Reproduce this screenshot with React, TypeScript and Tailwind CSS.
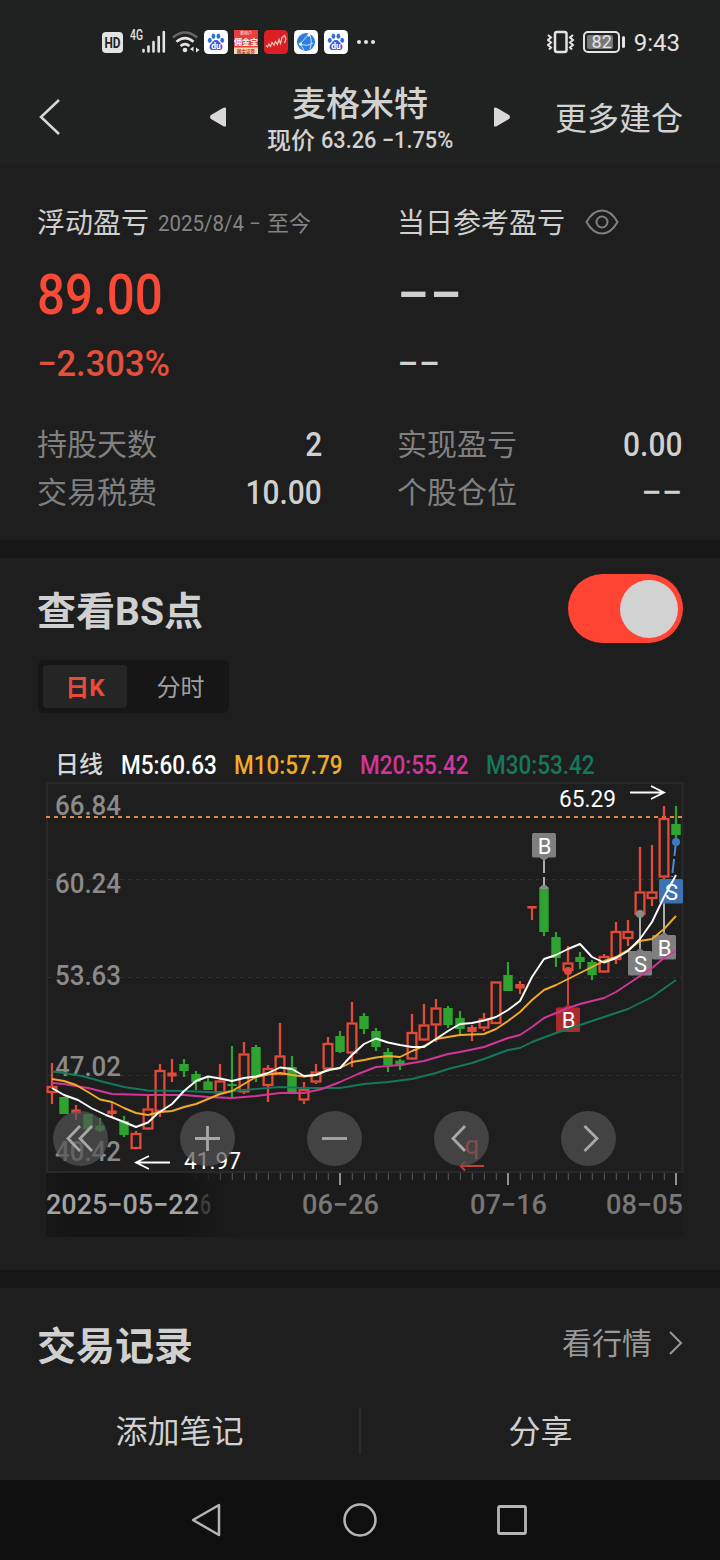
import React from 'react';
import clsx from 'clsx';

type Candle = {
  type: 'up' | 'down' | 'flat';
  top: number;
  bottom: number;
  high: number;
  low: number;
};

const c = (type: Candle['type'], top: number, bottom: number, high = top, low = bottom): Candle => ({
  type, top, bottom, high, low,
});

// One entry per trading day, 12px apart
const candles: Candle[] = [
  c('up', 1086, 1093, 1063, 1104),
  c('down', 1097, 1114),
  c('flat', 1109.5, 1113.5, 1105, 1120),
  c('down', 1114, 1129),
  c('down', 1125.5, 1130.5, 1118, 1132),
  c('flat', 1110.5, 1114, 1102, 1117),
  c('down', 1121, 1135, 1116, 1137),
  c('up', 1133, 1149, 1131, 1149),
  c('up', 1108.5, 1129.5, 1095, 1129),
  c('up', 1070, 1112, 1064, 1117),
  c('flat', 1072.5, 1076.5, 1059, 1082),
  c('down', 1064, 1071, 1059, 1077),
  c('down', 1074, 1082, 1071, 1090),
  c('down', 1081.5, 1090, 1078, 1090),
  c('up', 1080.5, 1093.5, 1064, 1095),
  c('down', 1084, 1086, 1046, 1097),
  c('up', 1053.5, 1092.5, 1042, 1094),
  c('down', 1047, 1077, 1045, 1082),
  c('up', 1068, 1086, 1065, 1102),
  c('up', 1055.5, 1075, 1023, 1075),
  c('down', 1067, 1092, 1056, 1092),
  c('up', 1089, 1100.5, 1082, 1104),
  c('up', 1071.5, 1082.5, 1064, 1084),
  c('up', 1043, 1069.5, 1037, 1072),
  c('down', 1036, 1052, 1031, 1053),
  c('up', 1022.5, 1053.5, 1002, 1067),
  c('down', 1016, 1029, 1013, 1034),
  c('down', 1031, 1047, 1028, 1051),
  c('down', 1052, 1065, 1048, 1072),
  c('down', 1060.5, 1065.5, 1059, 1070),
  c('up', 1032, 1059.5, 1014, 1059),
  c('up', 1024.5, 1040.5, 1004, 1041),
  c('up', 1007.5, 1025.5, 999, 1042),
  c('down', 1008, 1025, 1006, 1028),
  c('down', 1018, 1029, 1011, 1034),
  c('flat', 1027, 1032, 1025, 1041),
  c('up', 1018.5, 1028.5, 1013, 1031),
  c('up', 981.5, 1024),
  c('down', 975, 991, 962, 991),
  c('flat', 984, 988.5, 981, 994),
  c('flat', 906, 908.5, 906, 920),
  c('down', 887, 932, 884, 936),
  c('down', 937, 958, 932, 967),
  c('up', 962.5, 971, 946, 971),
  c('down', 957, 962, 952, 969),
  c('down', 962, 975, 960, 980),
  c('up', 956, 972.5, 954, 972),
  c('up', 931, 960, 922, 964),
  c('up', 931, 939, 920, 946),
  c('up', 891.5, 915, 847, 915),
  c('up', 891.5, 899, 845, 906),
  c('up', 818, 877.5, 806, 897),
  c('down', 824, 835, 806, 840),
];

const averages = [
  {
    color: '#15785a',
    points: '52,1071.5 64,1073 82,1076 100,1081 124,1087 148,1090.5 184,1091 220,1092.5 244,1090 280,1087 304,1088 340,1088 364,1084 388,1082 412,1079 436,1073 448,1069 472,1063 484,1059 508,1050 520,1048 532,1042 556,1033 580,1025 604,1017 628,1009 652,997 676,980',
  },
  {
    color: '#d4359b',
    points: '52,1083 64,1084 88,1088 112,1094 148,1095 184,1095 208,1097 232,1098 256,1096 280,1093 304,1093 322,1089 340,1082 358,1074 376,1067 400,1065 424,1061 448,1054 460,1052 484,1047 508,1038 520,1035 532,1027 544,1018 556,1013 568,1008 580,1004 604,998 616,992 640,976 652,968 664,958 676,951',
  },
  {
    color: '#f0ab29',
    points: '52,1079 64,1081 76,1085 88,1092 100,1099.5 112,1102 124,1108 136,1113 148,1115 160,1112 172,1111 184,1107 196,1104 208,1099 220,1094 232,1091 244,1084 256,1077 268,1074.5 280,1073 292,1075 304,1076.5 316,1075 328,1070 340,1068 352,1062 364,1060 376,1057.5 388,1056 400,1057 412,1051 424,1046 436,1039 448,1037 460,1035 484,1034 496,1029 508,1021 520,1012 532,1000 544,990 556,985 568,979 580,973 592,967 604,961 616,957 628,950 640,941 652,939 664,929 676,916',
  },
  {
    color: '#ffffff',
    points: '52,1088 64,1095 78,1100 92,1108.5 106,1115 124,1122 136,1127 148,1122.5 158,1113 172,1104 184,1091 196,1081 208,1076.5 220,1078.5 232,1081 244,1078 256,1076.5 268,1073 280,1067.5 292,1069 304,1076 316,1075 328,1070 340,1068 352,1055 364,1044 376,1038.5 388,1042.5 400,1045 412,1047 424,1047 436,1039 448,1031 460,1024 472,1023 484,1020.5 496,1017 508,1010 520,1001 532,977 544,959 556,955 568,949 580,944 592,957 604,962.5 616,958 628,951 640,939 652,922 664,897 676,875',
  },
];

const priceLabels = [
  { text: '66.84', y: 815 },
  { text: '60.24', y: 893 },
  { text: '53.63', y: 985 },
  { text: '47.02', y: 1076 },
  { text: '40.42', y: 1161 },
];

const markers = [
  { text: 'B', x: 532, y: 833, color: '#7f7f7f' },
  { text: 'B', x: 556, y: 1007.5, color: '#ad2a2d' },
  { text: 'S', x: 628, y: 951, color: '#7f7f7f' },
  { text: 'B', x: 652, y: 935, color: '#7f7f7f' },
  { text: 'S', x: 659, y: 879, color: '#3f72b3' },
];

const ticks = Array.from({ length: 41 }, (_, i) => 196 + i * 12);

function CandleShape({ candle, x }: { candle: Candle; x: number }) {
  const { type, top, bottom, high, low } = candle;
  const color = type === 'down' ? '#2fa32f' : '#e24b3a';
  if (type !== 'up') {
    return (
      <g fill={color}>
        <rect x={x - 1.1} y={high} width="2.2" height={low - high} />
        <rect x={x - 4.7} y={top} width="9.4" height={bottom - top} />
      </g>
    );
  }
  return (
    <g stroke={color} strokeWidth="2.3" fill="none">
      <path d={`M${x} ${high}V${top}M${x} ${bottom}V${low}`} />
      <rect x={x - 4.4} y={top + 1} width="8.8" height={bottom - top - 2} />
    </g>
  );
}

function Chart() {
  return (
    <svg viewBox="46 782 638 456" width="638" height="456" className="block" fontFamily="Roboto, 'Noto Sans CJK SC', sans-serif">
      <defs>
        <linearGradient id="dateFade" x1="0" x2="1">
          <stop offset="0" stopColor="#131313" stopOpacity="0.6" />
          <stop offset="0.15" stopColor="#121212" />
          <stop offset="0.7" stopColor="#121212" />
          <stop offset="1" stopColor="#121212" stopOpacity="0" />
        </linearGradient>
      </defs>
      <rect x="46" y="1172" width="637" height="65" fill="#1b1b1b" />
      <rect x="47" y="783" width="635.5" height="389" fill="none" stroke="#292929" strokeWidth="2" />
      <path d="M48 879.5H682M48 977.5H682M48 1075.5H682" stroke="#303030" strokeDasharray="4 4" />

      <g fill="#8a8a8a" fontSize="27" fontWeight="500">
        {priceLabels.map((label) => (
          <text key={label.text} x="55" y={label.y} textLength="66" lengthAdjust="spacingAndGlyphs">{label.text}</text>
        ))}
      </g>
      <path d="M46 817H682" stroke="#e28b40" strokeWidth="2" strokeDasharray="4 4" />

      {candles.map((candle, i) => (
        <CandleShape key={i} candle={candle} x={52 + i * 12} />
      ))}

      {/* buy / sell markers */}
      <g strokeWidth="2" stroke="#adadad">
        <path d="M544 858V873M544 877V888" />
        <path d="M640 914V949M664 897V934" />
        <path d="M568 971V1008" stroke="#d8402f" />
        <path d="M676 842L672 877" stroke="#4d8ad6" strokeDasharray="14 3" />
      </g>
      <path d="M540 889a4 4 0 0 1 8 0z" fill="#8a8a8a" />
      <circle cx="640" cy="914" r="4" fill="#8a8a8a" />
      <circle cx="664" cy="897" r="4" fill="#8a8a8a" />
      <circle cx="568" cy="971" r="4" fill="#e24b3a" />
      <circle cx="676" cy="842" r="4" fill="#3f78c4" />
      <path d="M539 857h10l-5 4zM635 952h10l-5-4zM659 936h10l-5-4z" fill="#7f7f7f" />
      <path d="M563 1008h10l-5-4z" fill="#ad2a2d" />
      {markers.map((m) => (
        <g key={`${m.x}-${m.y}`}>
          <rect x={m.x} y={m.y} width="24" height="24.5" rx="1.5" fill={m.color} />
          <text x={m.x + 12.5} y={m.y + 20.5} fontSize="22" fill="#fff" textAnchor="middle">{m.text}</text>
        </g>
      ))}

      {averages.map((line) => (
        <polyline key={line.color} points={line.points} fill="none" stroke={line.color} strokeWidth="1.9" strokeLinejoin="round" />
      ))}

      <g fill="#fff" fontSize="23.5">
        <text x="559" y="807" textLength="57" lengthAdjust="spacingAndGlyphs">65.29</text>
        <text x="184" y="1169" textLength="57" lengthAdjust="spacingAndGlyphs">41.97</text>
      </g>
      <path d="M630 792.5H664M651 786L664 792.5L651 799M170 1162.5H136M149 1156L136 1162.5L149 1169" fill="none" stroke="#fff" strokeWidth="1.8" />
      <text x="464.5" y="1153.5" fontSize="26" fill="#f0433c">q</text>
      <path d="M484 1166H461M465 1161.5L460.5 1166L465 1170.5" fill="none" stroke="#c4403a" strokeWidth="1.8" />

      {ticks.map((x) => (
        <path key={x} d={(x - 340) % 168 === 0 ? `M${x} 1173v12` : `M${x + 0.3} 1173v7`} stroke={x < 215 ? '#303030' : (x - 340) % 168 === 0 ? '#909090' : '#5c5c5c'} strokeWidth={(x - 340) % 168 === 0 ? 2 : 1} />
      ))}
      <g fill="#777" fontSize="27.5" fontWeight="500">
        <text x="200" y="1214" fill="#5a5a5a" textLength="11" lengthAdjust="spacingAndGlyphs">6</text>
        <rect x="46" y="1173" width="188" height="64" fill="url(#dateFade)" opacity="0.75" />
        <text x="46" y="1214" fill="#a3a3a3" textLength="153" lengthAdjust="spacingAndGlyphs">2025−05−22</text>
        <text x="302" y="1214" textLength="77" lengthAdjust="spacingAndGlyphs">06−26</text>
        <text x="470" y="1214" textLength="77" lengthAdjust="spacingAndGlyphs">07−16</text>
        <text x="606" y="1214" textLength="77" lengthAdjust="spacingAndGlyphs">08−05</text>
      </g>
    </svg>
  );
}

// double-left, plus, minus, left, right
const chartButtons = [
  'M27 15L15 27.5L27 40M39 15L27 27.5L39 40',
  'M15 27.5H40M27.5 15V40',
  'M15 27.5H40',
  'M31 15L19 27.5L31 40',
  'M23.5 15L36 27.5L23.5 40',
];

function BaiduIcon() {
  return (
    <svg viewBox="0 0 24 24" className="h-6 w-6">
      <rect width="24" height="24" rx="4.5" fill="#fff" />
      <g fill="#2f6fdc">
        <ellipse cx="5.8" cy="10.2" rx="1.9" ry="2.5" />
        <ellipse cx="9.4" cy="6.2" rx="1.9" ry="2.6" />
        <ellipse cx="14.4" cy="6.2" rx="1.9" ry="2.6" />
        <ellipse cx="18.2" cy="10.2" rx="1.9" ry="2.5" />
      </g>
      <path d="M12 10c3 0 3.3 2.5 5.3 4.2 2.2 2 1.2 6-2 6-2 0-2-.4-3.3-.4s-1.3.4-3.3.4c-3.2 0-4.2-4-2-6C8.7 12.5 9 10 12 10z" fill="#4a55dc" />
      <text x="12" y="18.8" fontSize="8.5" fontWeight="700" fill="#fff" textAnchor="middle" fontFamily="Roboto, sans-serif">du</text>
    </svg>
  );
}

function StatusBar() {
  return (
    <div className="flex h-[84px] items-center justify-between pl-[102px] pr-10 text-[#e4e4e4]">
      <div className="flex items-center">
        <svg viewBox="0 0 21 21" className="h-[21px] w-[21px]">
          <rect width="21" height="21" rx="4" fill="#e4e4e4" />
          <text x="10.5" y="15.5" textAnchor="middle" fontSize="14" fontWeight="700" fill="#202221" fontFamily="Roboto, sans-serif" textLength="16" lengthAdjust="spacingAndGlyphs">HD</text>
        </svg>
        <svg viewBox="0 -4 36 28" className="mb-1 ml-[7px] h-7 w-9">
          <text x="0" y="10" fontSize="14" fontWeight="500" fill="#e4e4e4" fontFamily="Roboto, sans-serif" textLength="13" lengthAdjust="spacingAndGlyphs">4G</text>
          <path d="M13.5 20v1.5M18.5 16.5v5M23.5 12v9.5M28.7 7v14.5M33.8 2v19.5" stroke="#e4e4e4" strokeWidth="2.6" strokeLinecap="round" />
        </svg>
        <svg viewBox="0 0 28 24" className="ml-1.5 h-6 w-7" fill="none" strokeWidth="2.6">
          <path d="M1 7.5Q13 -2.5 25 7.5" stroke="#666" />
          <path d="M4.5 11.7Q13 4.5 21.5 11.7M8.5 16Q13 12.2 17.5 16" stroke="#e4e4e4" />
          <circle cx="13" cy="20" r="2.3" fill="#e4e4e4" />
          <path d="M21.5 16.5v5l-3.5-2.5zM24 17.5v5l3.5-2.5z" fill="#e4e4e4" />
        </svg>
        <div className="ml-1 flex gap-1.5">
          <BaiduIcon />
          <svg viewBox="0 0 24 24" className="h-6 w-6" fontFamily="'Noto Sans CJK SC', sans-serif" textAnchor="middle">
            <rect width="24" height="24" fill="#e5403c" />
            <rect y="17.5" width="24" height="6.5" fill="#f3d9ae" />
            <text x="12" y="4.5" fontSize="4" fill="#fff">新用户</text>
            <text x="12" y="15" fontSize="8" fontWeight="700" fill="#fff">佣金宝</text>
            <text x="12" y="22.7" fontSize="4.5" fontWeight="700" fill="#c8322e">国金证券</text>
          </svg>
          <svg viewBox="0 0 24 24" className="h-6 w-6">
            <rect width="24" height="24" rx="4.5" fill="#dc1f22" />
            <path d="M2 15.5l1.5 1.500 1.500-3 1.500 2.500 1.500-4 2 2.500 1.500-3.500 2 3 1.500-5 1.500 4 1.500-6 2.500-2 1.500 3.500-1.500 4" fill="none" stroke="#f7c6c2" strokeWidth="1.2" />
          </svg>
          <svg viewBox="0 0 24 24" className="h-6 w-6">
            <rect width="24" height="24" rx="4.5" fill="#fff" />
            <circle cx="12" cy="12" r="9" fill="#2c7ee0" />
            <path d="M15 4L6 14q7 3 13-1M15 4q4 6 1 15M6 14l4 6" fill="none" stroke="#c8e2fb" strokeWidth="1" />
            <circle cx="15" cy="5" r="1.5" fill="#fff" />
            <circle cx="6.5" cy="14" r="1.5" fill="#fff" />
          </svg>
          <BaiduIcon />
        </div>
        <div className="ml-[9px] flex gap-[3px]">
          <i className="h-1 w-1 rounded-full bg-[#e4e4e4]" />
          <i className="h-1 w-1 rounded-full bg-[#e4e4e4]" />
          <i className="h-1 w-1 rounded-full bg-[#e4e4e4]" />
        </div>
      </div>
      <div className="flex items-center">
        <svg viewBox="0 0 28 24" className="h-6 w-7" fill="none" stroke="#e4e4e4" strokeWidth="2">
          <rect x="8" y="2" width="11.5" height="20" rx="2" strokeWidth="2.5" />
          <path d="M1 5l3 2.5L1 10l3 2.5L1 15l3 2.5-2 2M26 5l-3 2.5L26 10l-3 2.5L26 15l-3 2.5 2 2" strokeWidth="2" />
        </svg>
        <div className="ml-2 flex h-[22px] w-[37px] items-center rounded-[5px] border-2 border-[#e4e4e4] p-0.5">
          <div className="flex h-3.5 w-[26px] items-center justify-center rounded-[2px] bg-[#777] pl-1 text-[18px] leading-none">82</div>
        </div>
        <i className="ml-0.5 h-3 w-[3px] rounded-full bg-[#e4e4e4]" />
        <span className="ml-[9px] pt-0.5 text-[24px] leading-none">9:43</span>
      </div>
    </div>
  );
}

function Header() {
  return (
    <header className="h-[164px] bg-[#202221]">
      <StatusBar />
      <div className="flex h-[66px] items-center pl-[38px] pr-[37px] text-[#d2d2d2]">
        <svg viewBox="0 0 24 36" className="h-9 w-6" fill="none" stroke="#d8d8d8" strokeWidth="2.5">
          <path d="M21 1L3 18L21 35" />
        </svg>
        <svg viewBox="0 0 18 20" className="ml-[147px] h-5 w-[18px]">
          <path d="M17 1v18q-1 1-3 0L2 12q-2-2 0-4L14 1q2-1 3 0z" fill="#d8d8d8" />
        </svg>
        <div className="flex w-[266px] flex-col items-center pt-1.5">
          <h1 className="text-[34px] font-medium leading-[38px]">麦格米特</h1>
          <div className="flex h-8 w-[186px] items-center whitespace-nowrap pt-1 font-medium leading-7">
            <span className="text-[24px]">现价</span>
            <span className="ml-1.5 origin-left scale-x-[0.945] text-[23px]">63.26 −1.75%</span>
          </div>
        </div>
        <svg viewBox="0 0 18 20" className="h-5 w-[18px]">
          <path d="M1 1v18q1 1 3 0L16 12q2-2 0-4L4 1Q2 0 1 1z" fill="#d8d8d8" />
        </svg>
        <span className="ml-auto whitespace-nowrap pt-1 text-[32px] leading-none">更多建仓</span>
      </div>
    </header>
  );
}

function StatRow({ label, value }: { label: string; value: string }) {
  return (
    <div className="flex h-12 items-center justify-between">
      <span className="pt-0.5 text-[30px] leading-none text-[#808080]">{label}</span>
      <span
        className={clsx(
          'origin-right text-[34px] font-medium leading-none',
          value === '−−' ? 'scale-x-[1.08]' : 'scale-x-[0.88]',
        )}
      >
        {value}
      </span>
    </div>
  );
}

function Profit() {
  return (
    <section className="grid h-[376px] grid-cols-[285px_285px] content-start gap-x-[75px] px-[37px] pt-9 text-[#d0d0d0]">
      <div>
        <div className="flex h-11 items-center whitespace-nowrap pt-1">
          <span className="text-[28px] leading-none">浮动盈亏</span>
          <span className="ml-[9px] w-[109px] origin-left scale-x-[0.93] text-[22px] leading-none text-[#858585]">2025/8/4 −</span>
          <span className="text-[22px] leading-none text-[#858585]">至今</span>
        </div>
        <div className="mt-[21px] h-[60px] origin-left scale-x-[0.88] text-[56px] font-medium leading-[60px] text-[#f94a38]">89.00</div>
        <div className="mt-[15px] h-12 origin-left scale-x-[0.96] whitespace-nowrap text-[36px] font-medium leading-[48px] text-[#e4503c]">−2.303%</div>
      </div>
      <div>
        <div className="flex h-11 items-center whitespace-nowrap">
          <span className="pt-1 text-[28px] leading-none">当日参考盈亏</span>
          <svg viewBox="0 0 34 26" className="ml-5 h-[26px] w-[34px]" fill="none" stroke="#808080" strokeWidth="2">
            <path d="M1.5 13C6 5 11 1.5 17 1.5S28 5 32.5 13C28 21 23 24.5 17 24.5S6 21 1.5 13z" />
            <circle cx="17" cy="13" r="5.5" />
          </svg>
        </div>
        <div className="mt-[21px] h-[60px] origin-left scale-x-[1.04] text-[56px] font-medium leading-[60px]">−−</div>
        <div className="mt-[15px] h-12 origin-left scale-x-[1.06] text-[36px] font-medium leading-[48px]">−−</div>
      </div>
      <div className="mt-8">
        <StatRow label="持股天数" value="2" />
        <StatRow label="交易税费" value="10.00" />
      </div>
      <div className="mt-8">
        <StatRow label="实现盈亏" value="0.00" />
        <StatRow label="个股仓位" value="−−" />
      </div>
    </section>
  );
}

const legend = [
  { text: 'M5:60.63', className: 'w-[113px] text-white' },
  { text: 'M10:57.79', className: 'w-[126px] text-[#f0ab29]' },
  { text: 'M20:55.42', className: 'w-[126px] text-[#d4359b]' },
  { text: 'M30:53.42', className: 'w-[126px] text-[#15785a]' },
];

export default function App() {
  return (
    <div className="h-[1560px] w-[720px] overflow-hidden bg-[#1e1e1e] font-[Roboto,'Noto_Sans_CJK_SC',sans-serif]">
      <Header />
      <Profit />
      <div className="h-[18px] bg-[#171717]" />

      <section className="h-[712px] pt-4">
        <div className="flex h-[69px] items-center justify-between pl-[37px] pr-[37px]">
          <h2 className="pt-[7px] text-[39px] font-bold leading-none text-[#d0d0d0]">查看BS点</h2>
          <div className="flex h-[69px] w-[115px] items-center justify-end rounded-full bg-[#ff4433] p-[5px]">
            <div className="h-[58px] w-[58px] rounded-full bg-[#d2d2d2]" />
          </div>
        </div>

        <div className="ml-[38px] mt-[17px] flex h-[53px] w-[191px] items-center rounded-md bg-[#161616] p-[5px] text-[24px] leading-none">
          <button className="h-[43px] w-[84px] rounded bg-[#252525] pt-[3px] font-bold text-[#ea4a3a]">日K</button>
          <button className="h-[43px] flex-1 pl-2.5 pt-[3px] text-[#a0a0a0]">分时</button>
        </div>

        <div className="ml-[55px] mt-[35px] flex h-[34px] items-center whitespace-nowrap font-medium leading-none">
          <span className="w-[66px] text-[24px] text-[#d6d6d6]">日线</span>
          {legend.map((item) => (
            <span key={item.text} className={clsx('text-[25px]', item.className)}>
              <span className="inline-block origin-left scale-x-[0.9]">{item.text}</span>
            </span>
          ))}
        </div>

        <div className="relative ml-[46px] w-[638px]">
          <Chart />
          <div className="absolute left-[7px] top-[329px] flex gap-[72px]">
            {chartButtons.map((d) => (
              <button key={d} className="h-[55px] w-[55px] rounded-full bg-[#535353]/70">
                <svg viewBox="0 0 55 55" className="h-full w-full" fill="none" stroke="#a8a8a8" strokeWidth="2.8">
                  <path d={d} />
                </svg>
              </button>
            ))}
          </div>
        </div>
      </section>

      <div className="h-[18px] bg-[#171717]" />

      <section className="h-[192px] text-[#d0d0d0]">
        <div className="flex h-[110px] items-center justify-between px-[37px]">
          <h2 className="pt-2 text-[39px] font-bold leading-none">交易记录</h2>
          <div className="flex items-center text-[30px] leading-none text-[#999]">
            <span className="pt-0.5">看行情</span>
            <svg viewBox="0 0 16 26" className="ml-[15px] h-[26px] w-4" fill="none" stroke="#999" strokeWidth="2">
              <path d="M3 2L14 13L3 24" />
            </svg>
          </div>
        </div>
        <div className="flex h-[66px] items-center text-center text-[32px] leading-none">
          <div className="w-[359px] pt-0.5">添加笔记</div>
          <div className="h-[46px] w-0.5 bg-[#2c2c2c]" />
          <div className="w-[359px] pt-0.5">分享</div>
        </div>
      </section>

      <nav className="flex h-20 items-center bg-[#0f0f0f]">
        <svg viewBox="0 0 32 36" className="ml-[190px] h-9 w-8" fill="none" stroke="#b5b5b5" strokeWidth="2.5" strokeLinejoin="round">
          <path d="M29 3v30L3 18z" />
        </svg>
        <svg viewBox="0 0 36 36" className="ml-[120px] h-9 w-9" fill="none" stroke="#b5b5b5" strokeWidth="2.5">
          <circle cx="18" cy="18" r="15.5" />
        </svg>
        <svg viewBox="0 0 32 32" className="ml-[118px] h-8 w-8" fill="none" stroke="#b5b5b5" strokeWidth="2.8">
          <rect x="2.5" y="2.5" width="27" height="27" rx="1.5" />
        </svg>
      </nav>
    </div>
  );
}
